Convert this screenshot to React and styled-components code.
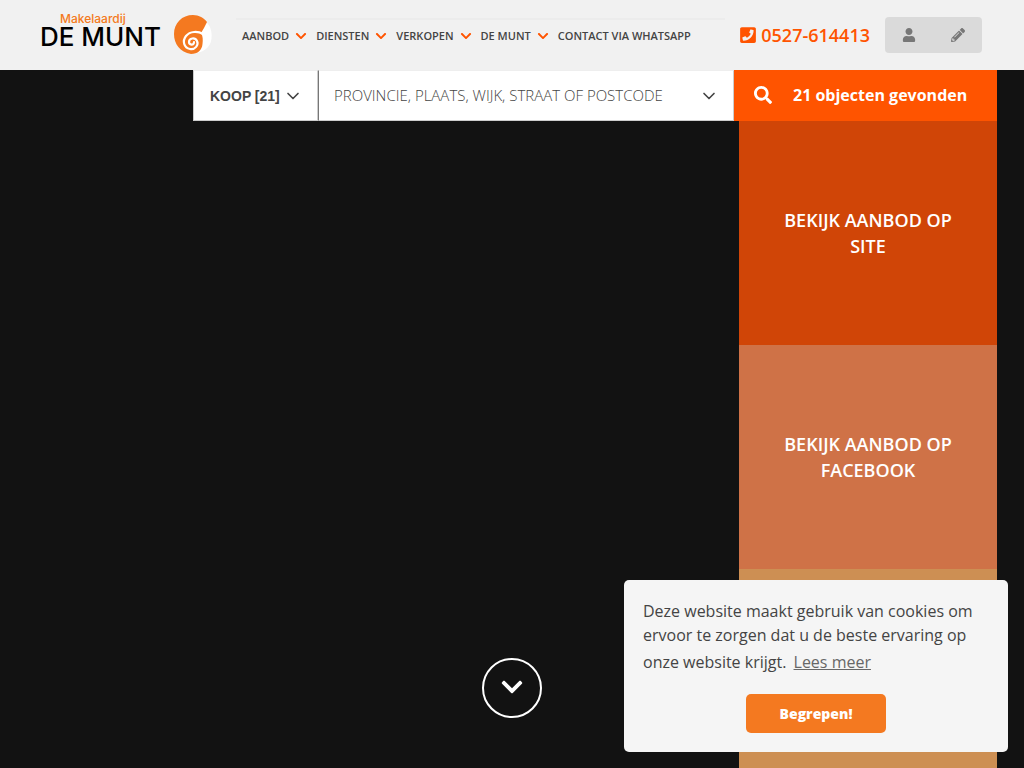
import React from "react";
import styled, { createGlobalStyle } from "styled-components";
import {
  FaChevronDown,
  FaPencilAlt,
  FaPhoneSquare,
  FaSearch,
  FaUser,
} from "react-icons/fa";
import { FiChevronDown } from "react-icons/fi";

const GlobalStyle = createGlobalStyle`
  * {
    box-sizing: border-box;
  }

  body {
    margin: 0;
    background-color: #121212;
    color: #444;
    font-family: "Open Sans", sans-serif;
    font-size: 16px;
  }

  button, input, select {
    margin: 0;
    border: 0;
    font-family: inherit;
  }
`;

const Page = styled.div`
  display: flex;
  flex-direction: column;
  height: 100vh;
  overflow: hidden;
`;

const Header = styled.header`
  display: flex;
  flex-shrink: 0;
  align-items: center;
  height: 70px;
  padding: 0 42px 0 40px;
  background-color: #f1f1f1;
`;

const LogoLink = styled.a`
  display: flex;
  align-items: center;
  gap: 13px;
  margin-right: 24px;
  color: #000;
  text-decoration: none;
`;

const LogoText = styled.span`
  display: flex;
  flex-direction: column;
  padding-bottom: 8px;
  font-family: Inter, sans-serif;
`;

const LogoTop = styled.span`
  padding-left: 20px;
  color: #f47920;
  font-size: 12px;
  font-weight: 500;
  line-height: 12px;
`;

const LogoName = styled.span`
  font-size: 26px;
  font-weight: 500;
  line-height: 24px;
`;

const Nav = styled.nav`
  display: flex;
  flex: 1;
  align-items: center;
  gap: 9px;
  height: 34px;
  padding-left: 6px;
  border-top: 2px solid #ececec;
`;

const NavLink = styled.a`
  display: flex;
  align-items: center;
  gap: 6px;
  color: #444;
  font-size: 11px;
  font-weight: 600;
  line-height: 16px;
  text-decoration: none;
  white-space: nowrap;

  svg {
    color: #ff5400;
    font-size: 12px;
  }
`;

const PhoneLink = styled.a`
  display: flex;
  align-items: center;
  gap: 4px;
  margin-left: 14px;
  color: #ff5400;
  font-size: 18px;
  font-weight: 600;
  line-height: 24px;
  text-decoration: none;
`;

const AccountBar = styled.div`
  display: flex;
  gap: 1px;
  margin-left: 15px;
  border-radius: 4px;
  background-color: #dadada;
`;

const AccountButton = styled.button`
  display: flex;
  align-items: center;
  justify-content: center;
  width: 48px;
  height: 36px;
  padding: 0;
  background: none;
  color: #777;
  font-size: 14px;
  cursor: pointer;
`;

const Hero = styled.main`
  position: relative;
  flex: 1;
  min-height: 0;
  padding: 0 27px 0 193px;
`;

const SearchForm = styled.form`
  display: flex;
  height: 51px;
`;

const Field = styled.div`
  position: relative;
  display: flex;
  flex: ${({ $grow }) => ($grow ? "1" : "0 0 125px")};
  border: 1px solid #ccc;
  border-top-color: #eee;
  border-left-color: ${({ $grow }) => ($grow ? "#777" : "#ccc")};
  background-color: #fff;

  svg {
    position: absolute;
    top: 15px;
    right: 14px;
    font-size: 20px;
    pointer-events: none;
  }
`;

const TypeSelect = styled.select`
  width: 100%;
  padding: 0 16px;
  appearance: none;
  background: none;
  color: #444;
  font-family: "Liberation Sans", Arial, sans-serif;
  font-size: 14px;
  font-weight: 700;
`;

const PlaceInput = styled.input`
  width: 100%;
  padding: 0 48px 2px 15px;
  background: none;
  color: #444;
  font-size: 15px;
  font-weight: 300;

  &::placeholder {
    color: #444;
    opacity: 1;
  }
`;

const SearchButton = styled.button`
  display: flex;
  flex: 0 0 263px;
  align-items: center;
  gap: 21px;
  padding: 0 20px 2px;
  background-color: #ff5400;
  color: #fff;
  font-size: 16px;
  font-weight: 700;
  cursor: pointer;

  svg {
    font-size: 18px;
  }
`;

const Tiles = styled.div`
  display: flex;
  flex-direction: column;
  width: 258px;
  height: calc(100% - 51px);
  margin-left: auto;
  overflow: hidden;
`;

const Tile = styled.a`
  display: flex;
  flex: 0 0 224px;
  align-items: center;
  justify-content: center;
  padding: 0 40px;
  background-color: ${({ $color }) => $color};
  color: #fff;
  font-size: 18px;
  font-weight: 600;
  line-height: 26px;
  text-align: center;
  text-decoration: none;
`;

const ScrollButton = styled.button`
  position: absolute;
  bottom: 50px;
  left: calc(50% - 30px);
  display: flex;
  align-items: center;
  justify-content: center;
  width: 60px;
  height: 60px;
  padding: 0 0 2px;
  border: 2px solid #fff;
  border-radius: 50%;
  background: none;
  color: #fff;
  font-size: 24px;
  cursor: pointer;
`;

const CookieBox = styled.div`
  position: fixed;
  right: 16px;
  bottom: 16px;
  display: flex;
  flex-direction: column;
  align-items: center;
  gap: 17px;
  width: 384px;
  padding: 19px;
  border-radius: 5px;
  background-color: #f5f5f5;
`;

const CookieText = styled.p`
  width: 100%;
  margin: 0;
  font-size: 16px;
  line-height: 24px;
`;

const CookieLink = styled.a`
  display: inline-block;
  padding: 3px;
  color: #444;
  opacity: 0.8;
`;

const CookieButton = styled.button`
  width: 140px;
  height: 39px;
  border-radius: 5px;
  background-color: #f47920;
  color: #fff;
  font-size: 14px;
  font-weight: 800;
  cursor: pointer;
`;

const navItems = [
  { label: "AANBOD", sub: true },
  { label: "DIENSTEN", sub: true },
  { label: "VERKOPEN", sub: true },
  { label: "DE MUNT", sub: true },
  { label: "CONTACT VIA WHATSAPP" },
];

const Shell = () => (
  <svg width="38" height="40" viewBox="0 0 38 40" aria-hidden="true">
    <path
      fill="#fff"
      d="M32 7C38 12 39 22 36 29C33 35 26 38 18 39L20 24Z"
    />
    <path
      fill="#f47920"
      d="M0 19C0 8 8 0 19 0C25 0 30 3 33 7C31 11 29 15 27 18C29 21 29 25 28.500 29C28 35 24 39 17 39C6 37 0 29 0 19Z"
    />
    <path
      fill="none"
      stroke="#fff"
      strokeWidth="2.200"
      strokeLinecap="round"
      d="M29 19C24 16 16 16 12 21C8 26 10 33 16 34C21 35 25 30 23 26C21 22 15 23 15 27C15 30 20 31 20 27"
    />
  </svg>
);

const App = () => (
  <>
    <GlobalStyle />
    <Page>
      <Header>
        <LogoLink href="#">
          <LogoText>
            <LogoTop>Makelaardij</LogoTop>
            <LogoName>DE MUNT</LogoName>
          </LogoText>
          <Shell />
        </LogoLink>
        <Nav>
          {navItems.map(({ label, sub }) => (
            <NavLink key={label} href="#">
              {label}
              {sub && <FaChevronDown />}
            </NavLink>
          ))}
        </Nav>
        <PhoneLink href="tel:0527614413">
          <FaPhoneSquare />
          0527-614413
        </PhoneLink>
        <AccountBar>
          <AccountButton type="button" aria-label="Inloggen">
            <FaUser />
          </AccountButton>
          <AccountButton type="button" aria-label="Inschrijven">
            <FaPencilAlt />
          </AccountButton>
        </AccountBar>
      </Header>
      <Hero>
        <SearchForm onSubmit={(e) => e.preventDefault()}>
          <Field>
            <TypeSelect aria-label="Type aanbod">
              <option>KOOP [21]</option>
            </TypeSelect>
            <FiChevronDown />
          </Field>
          <Field $grow>
            <PlaceInput
              type="text"
              aria-label="Locatie"
              placeholder="PROVINCIE, PLAATS, WIJK, STRAAT OF POSTCODE"
            />
            <FiChevronDown />
          </Field>
          <SearchButton type="submit">
            <FaSearch />
            21 objecten gevonden
          </SearchButton>
        </SearchForm>
        <Tiles>
          <Tile href="#" $color="#d04507">
            BEKIJK AANBOD OP SITE
          </Tile>
          <Tile href="#" $color="#cf7247">
            BEKIJK AANBOD OP FACEBOOK
          </Tile>
          <Tile href="#" $color="#cd8f53" />
        </Tiles>
        <ScrollButton type="button" aria-label="Naar beneden">
          <FaChevronDown />
        </ScrollButton>
      </Hero>
      <CookieBox role="dialog" aria-label="Cookies">
        <CookieText>
          Deze website maakt gebruik van cookies om ervoor te zorgen dat u de
          beste ervaring op onze website krijgt.{" "}
          <CookieLink href="#">Lees meer</CookieLink>
        </CookieText>
        <CookieButton type="button">Begrepen!</CookieButton>
      </CookieBox>
    </Page>
  </>
);

export default App;
